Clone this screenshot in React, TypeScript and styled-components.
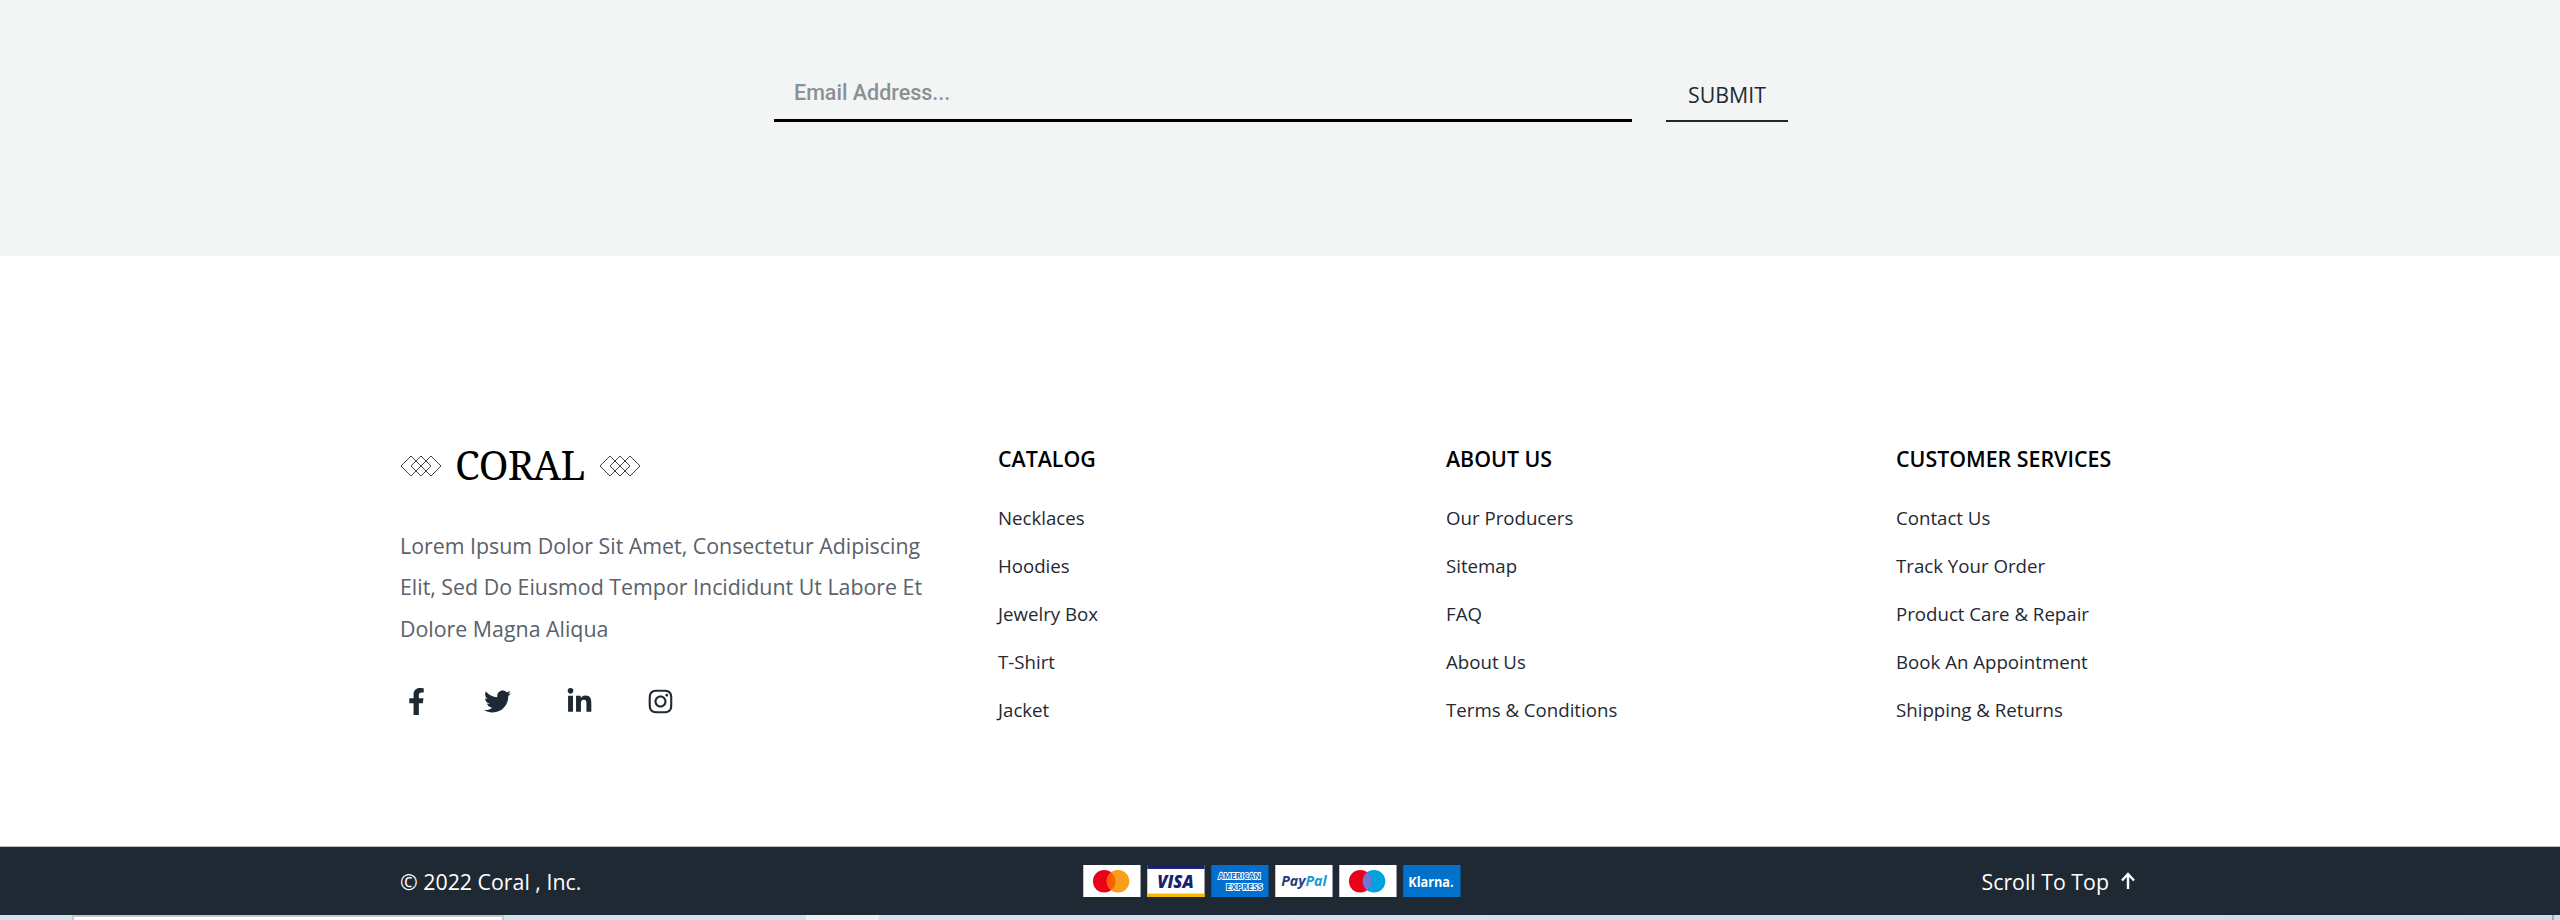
import React from "react";
import styled, { createGlobalStyle } from "styled-components";
import { FaFacebookF, FaTwitter, FaLinkedinIn, FaInstagram } from "react-icons/fa";

const ink = "#1f2933";

const GlobalStyle = createGlobalStyle`
  * { box-sizing: border-box; }
  body { margin: 0; background: #fff; font-family: "Open Sans", sans-serif; color: ${ink}; }
  ul { list-style: none; margin: 0; padding: 0; }
  h4, p { margin: 0; }
  a { color: inherit; text-decoration: none; }
`;

const Page = styled.div`
  width: 2560px;
  height: 920px;
  overflow: hidden;
  display: flex;
  flex-direction: column;
`;

const Newsletter = styled.form`
  height: 256px;
  flex: none;
  background: #f3f5f4;
  display: flex;
  justify-content: center;
  align-items: flex-start;
  gap: 34px;
  padding: 62px 0 0 2px;
`;

const EmailInput = styled.input`
  width: 858px;
  height: 60px;
  border: 0;
  border-bottom: 3px solid #000;
  background: transparent;
  outline: 0;
  padding: 3px 20px 0;
  font: 500 21.5px Roboto, sans-serif;
  color: ${ink};
  &::placeholder { color: #8a9094; opacity: 1; }
`;

const SubmitButton = styled.button`
  width: 122px;
  height: 60px;
  border: 0;
  border-bottom: 2px solid ${ink};
  background: transparent;
  padding: 6px 0 0;
  font: 400 21.33px "Open Sans", sans-serif;
  color: ${ink};
`;

const Footer = styled.footer`
  height: 590px;
  flex: none;
  padding: 187px 400px 0;
  display: grid;
  grid-template-columns: 598px 448px 450px 1fr;
  align-items: start;
`;

const Brand = styled.section`
  display: flex;
  flex-direction: column;
`;

const Logo = styled.div`
  display: flex;
  align-items: center;
  height: 46px;
  gap: 13px;
  color: #000;
`;

const LogoName = styled.span`
  width: 131px;
  padding-bottom: 2px;
  font: 400 40px/44px "Noto Serif", "Droid Serif", "DejaVu Serif", serif;
  letter-spacing: -0.8px;
  white-space: nowrap;
`;

const About = styled.p`
  margin-top: 36px;
  width: 540px;
  font-size: 21.36px;
  line-height: 41.3px;
  color: #59616a;
  white-space: nowrap;
`;

const Socials = styled.div`
  display: flex;
  margin-top: 25px;
  height: 56px;
  align-items: center;
`;

const SocialLink = styled.a`
  display: flex;
  width: 32px;
  margin-right: 49.5px;
  justify-content: center;
  font-size: 27px;
`;

const ColumnTitle = styled.h4`
  font-size: 21.36px;
  font-weight: 600;
  line-height: 31px;
  color: #000;
`;

const LinkList = styled.ul`
  margin-top: 20px;
`;

const LinkItem = styled.li`
  height: 48px;
  line-height: 48px;
  font-size: 18.67px;
  white-space: nowrap;
`;

const BottomBar = styled.div`
  height: 69px;
  flex: none;
  background: ${ink};
  border-top: 1px solid #b9bfc3;
  color: #fff;
  display: grid;
  grid-template-columns: 683px 380px 1fr;
  align-items: center;
  padding: 0 424px 0 400px;
  font-size: 21.33px;
`;

const ScrollTop = styled.a`
  display: flex;
  justify-content: flex-end;
  align-items: center;
  gap: 11px;
`;

const Payments = styled.div`
  display: flex;
  gap: 6.2px;
`;

const Card = styled.svg`
  display: block;
  flex: none;
  width: 57.8px;
  height: 32.6px;
`;

const Backdrop = styled.div`
  flex: 1;
  display: flex;
  background: linear-gradient(90deg, #cfe3ee, #d3e2ec 50%, #d2dbe9);
`;

const WindowEdge = styled.div`
  width: 432px;
  margin-left: 72px;
  border: 2px solid #c9c6c9;
  border-bottom: 0;
  background: #fff;
`;

const LightPatch = styled.div`
  width: 73px;
  margin-left: 302px;
  background: #eaf0f9;
`;

const ScrollEdge = styled.div`
  width: 2px;
  margin-left: auto;
  margin-right: 6px;
  background: #a3abbd;
`;

const Diamonds = () => (
  <svg width="42" height="24" viewBox="0 0 42 24" fill="none" stroke="#111" strokeWidth="0.8">
    <path d="M11 2l10 10-10 10L1 12z" />
    <path d="M21 2l10 10-10 10L11 12z" />
    <path d="M31 2l10 10-10 10L21 12z" />
  </svg>
);

const columns = [
  { title: "CATALOG", links: ["Necklaces", "Hoodies", "Jewelry Box", "T-Shirt", "Jacket"] },
  { title: "ABOUT US", links: ["Our Producers", "Sitemap", "FAQ", "About Us", "Terms & Conditions"] },
  {
    title: "CUSTOMER SERVICES",
    links: ["Contact Us", "Track Your Order", "Product Care & Repair", "Book An Appointment", "Shipping & Returns"],
  },
];

const socials = [
  { name: "Facebook", Icon: FaFacebookF },
  { name: "Twitter", Icon: FaTwitter },
  { name: "LinkedIn", Icon: FaLinkedinIn },
  { name: "Instagram", Icon: FaInstagram },
];

const sans = '"Open Sans", sans-serif';

export default function App() {
  return (
    <Page>
      <GlobalStyle />
      <Newsletter>
        <EmailInput placeholder="Email Address..." />
        <SubmitButton type="button">SUBMIT</SubmitButton>
      </Newsletter>
      <Footer>
        <Brand>
          <Logo>
            <Diamonds />
            <LogoName>CORAL</LogoName>
            <Diamonds />
          </Logo>
          <About>
            Lorem Ipsum Dolor Sit Amet, Consectetur Adipiscing
            <br />
            Elit, Sed Do Eiusmod Tempor Incididunt Ut Labore Et
            <br />
            Dolore Magna Aliqua
          </About>
          <Socials>
            {socials.map(({ name, Icon }) => (
              <SocialLink key={name} aria-label={name}>
                <Icon />
              </SocialLink>
            ))}
          </Socials>
        </Brand>
        {columns.map((column) => (
          <section key={column.title}>
            <ColumnTitle>{column.title}</ColumnTitle>
            <LinkList>
              {column.links.map((link) => (
                <LinkItem key={link}>
                  <a>{link}</a>
                </LinkItem>
              ))}
            </LinkList>
          </section>
        ))}
      </Footer>
      <BottomBar>
        <span>© 2022 Coral , Inc.</span>
        <Payments>
          <Card viewBox="0 0 58 33">
            <rect width="58" height="33" fill="#fff" />
            <circle cx="21.2" cy="16.5" r="11.4" fill="#eb001b" />
            <circle cx="35.2" cy="16.5" r="11.4" fill="#f79e1b" />
            <path d="M28.2 7.5a11.4 11.4 0 0 1 0 18a11.4 11.4 0 0 1 0-18z" fill="#ff5f00" />
          </Card>
          <Card viewBox="0 0 58 33">
            <rect width="58" height="33" fill="#fff" />
            <rect width="58" height="4" fill="#1a1f71" />
            <rect y="29" width="58" height="4" fill="#f7b600" />
            <text x="10" y="22.8" textLength="37" lengthAdjust="spacingAndGlyphs" fontFamily={sans} fontSize="17" fontWeight="800" fontStyle="italic" fill="#1a1f71">VISA</text>
          </Card>
          <Card viewBox="0 0 58 33">
            <rect width="58" height="33" fill="#016fd0" />
            <text x="7" y="14" textLength="43" lengthAdjust="spacingAndGlyphs" fontFamily={sans} fontSize="9" fontWeight="700" fill="#016fd0" stroke="#fff" strokeWidth="1.8" paintOrder="stroke">AMERICAN</text>
            <text x="15" y="25" textLength="37" lengthAdjust="spacingAndGlyphs" fontFamily={sans} fontSize="9" fontWeight="700" fill="#016fd0" stroke="#fff" strokeWidth="1.8" paintOrder="stroke">EXPRESS</text>
          </Card>
          <Card viewBox="0 0 58 33">
            <rect width="58" height="33" fill="#fff" />
            <text x="6" y="21" textLength="46" lengthAdjust="spacingAndGlyphs" fontFamily={sans} fontSize="15" fontWeight="700" fontStyle="italic" fill="#253b80">Pay<tspan fill="#179bd7">Pal</tspan></text>
          </Card>
          <Card viewBox="0 0 58 33">
            <rect width="58" height="33" fill="#fff" />
            <circle cx="21.2" cy="16.5" r="11.4" fill="#eb001b" />
            <circle cx="35.2" cy="16.5" r="11.4" fill="#00a1df" />
            <path d="M28.2 7.5a11.4 11.4 0 0 1 0 18a11.4 11.4 0 0 1 0-18z" fill="#7375cf" />
          </Card>
          <Card viewBox="0 0 58 33">
            <rect width="58" height="33" fill="#0072cc" />
            <text x="5" y="21.8" textLength="46" lengthAdjust="spacingAndGlyphs" fontFamily={sans} fontSize="14" fontWeight="700" fill="#fff">Klarna.</text>
          </Card>
        </Payments>
        <ScrollTop>
          Scroll To Top
          <svg width="16" height="18" viewBox="0 0 16 18" fill="none" stroke="#fff" strokeWidth="2.4">
            <path d="M8 17V2M2 8.5l6-6.5 6 6.5" />
          </svg>
        </ScrollTop>
      </BottomBar>
      <Backdrop>
        <WindowEdge />
        <LightPatch />
        <ScrollEdge />
      </Backdrop>
    </Page>
  );
}
